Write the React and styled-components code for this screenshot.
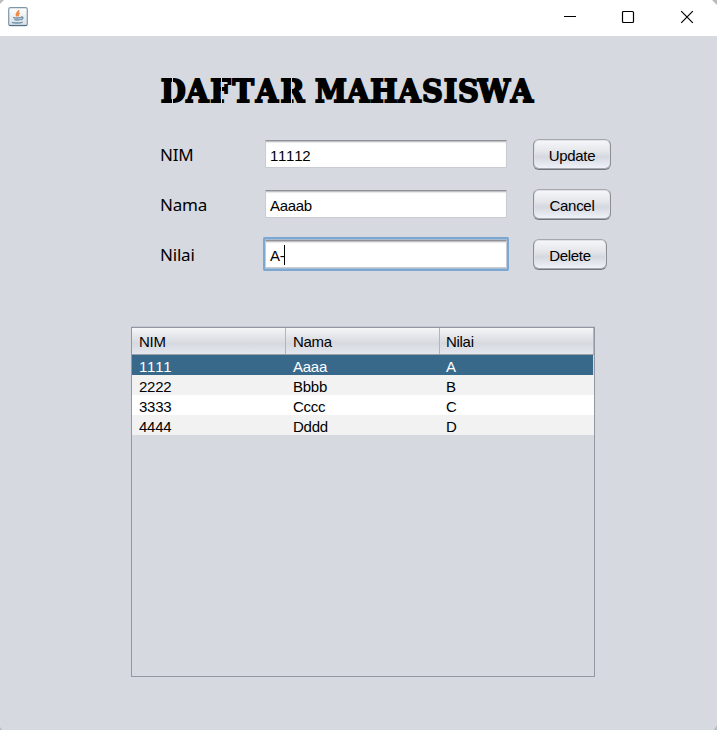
import React from "react";
import styled, { createGlobalStyle } from "styled-components";

const GlobalStyle = createGlobalStyle`
  * { box-sizing: border-box; }
  body { margin: 0; background: #d6d9e0; overflow: hidden; }
`;

const Window = styled.div`
  width: 717px;
  height: 730px;
  display: flex;
  flex-direction: column;
  background: #d6d9e0;
  color: #000;
  font: 15px/20px "Liberation Sans", Arial, sans-serif;
  overflow: hidden;
  position: relative;
`;

const CornerMarks = styled.svg`
  position: absolute;
  inset: 0;
  pointer-events: none;
`;

const TitleBar = styled.header`
  height: 36px;
  flex: none;
  background: #fff;
  display: flex;
  align-items: flex-start;
  justify-content: space-between;
  padding: 0 1px 0 8px;
`;

const AppIcon = styled.svg`
  width: 20px;
  height: 20px;
  margin-top: 7px;
`;

const WindowControls = styled.div`
  display: flex;
`;

const ControlButton = styled.button`
  width: 58.5px;
  height: 34px;
  padding: 0;
  border: 0;
  background: none;
  display: grid;
  place-items: center;
`;

const Content = styled.main`
  padding: 37px 0 0 131px;
`;

const Title = styled.h1`
  margin: 0 0 0 30px;
  height: 36px;
  width: 378px;
  font: bold 32px/36px "DejaVu Serif Condensed", "DejaVu Serif", serif;
  font-stretch: condensed;
  -webkit-text-stroke: 1.8px #000;
  white-space: nowrap;
`;

const Letter = styled.span`
  display: inline-flex;
  justify-content: center;
  width: ${(p) => p.$width}px;
  height: 36px;
  vertical-align: top;
  position: relative;

  /* stencil bridge cut through the glyph */
  &::after {
    content: "";
    display: ${(p) => (p.$cut ? "block" : "none")};
    position: absolute;
    left: ${(p) => p.$cut}px;
    top: 3px;
    width: 1px;
    height: 30px;
    background: #d6d9e0;
  }
`;

const Form = styled.form`
  margin-top: 27px;
  margin-left: 29px;
  display: grid;
  grid-template-columns: 102px 246px auto;
  grid-auto-rows: 38px;
  row-gap: 12px;
`;

const Label = styled.label`
  font: 17px/38px "Noto Sans", "Open Sans", sans-serif;
  letter-spacing: -0.2px;
`;

const FieldFrame = styled.div`
  width: 246px;
  height: 34px;
  margin: 1px 0 0 1px;
  padding: 3px 2px 3px 2px;
  border-radius: 2px;
  box-shadow: ${(p) => (p.$focused ? "inset 0 0 0 2px #7aa8d3, inset 0 0 0 3px #a9bdd2" : "none")};
`;

const Field = styled.div`
  height: 28px;
  padding: 3px 0 0 4px;
  background: #fff;
  border: 1px solid #c9ccd2;
  border-top-color: #8f9196;
  box-shadow: inset 0 1px 0 #c0c1c4, inset 0 2px 1px #e8e8e8;
  display: flex;
  align-items: center;
  font-kerning: none;
  letter-spacing: -0.3px;
  white-space: pre;
`;

const Caret = styled.span`
  width: 1px;
  height: 20px;
  margin: -2px 0 0 0;
  background: #000;
`;

const Button = styled.button`
  justify-self: start;
  width: ${(p) => p.$width}px;
  height: 31px;
  margin: 3px 0 0 25px;
  padding: 3px 0 0;
  border: 1px solid #93959b;
  border-color: #a6a8ae #8d8f95 #74767d;
  border-radius: 6px;
  background: linear-gradient(#f6f7f9 0%, #e5e7eb 38%, #d5d8df 58%, #e5e8ee 82%, #f1f4fa 100%);
  box-shadow: inset 0 -1px 0 #a7a9b0, inset 0 0 0 1px #dfe1e6;
  font: 15px/20px "Liberation Sans", Arial, sans-serif;
  letter-spacing: -0.3px;
  color: #000;
`;

const Table = styled.div`
  width: 464px;
  height: 350px;
  margin-top: 53px;
  border: 1px solid #9297a1;
  box-shadow: 0 -1px 0 #c6c9d1;
`;

const Columns = styled.div`
  display: grid;
  grid-template-columns: 154px 154px 154px;
`;

const HeaderRow = styled(Columns)`
  height: 27px;
  border-bottom: 1px solid #9a9fa8;
  background: linear-gradient(#f5f6f8 0%, #e2e4e8 35%, #d6d9df 60%, #e5e9ef 100%);
`;

const HeaderCell = styled.div`
  padding: 4px 0 0 7px;
  border-right: 1px solid #b2b5bc;
  letter-spacing: -0.3px;

  &:last-child { padding-left: 6px; }
`;

const Row = styled(Columns)`
  height: 20px;
  margin-right: ${(p) => (p.$selected ? 1 : 0)}px;
  background: ${(p) => (p.$selected ? "#39698a" : p.$striped ? "#f2f2f2" : "#fff")};
  color: ${(p) => (p.$selected ? "#fff" : "#000")};
`;

const Cell = styled.div`
  padding: 2px 0 0 7px;
  line-height: 20px;
  letter-spacing: -0.25px;
  font-kerning: none;

  &:last-child { padding-left: 6px; }
`;

const titleWords = [
  [["D", 24.5, 11], ["A", 24], ["F", 22, 11], ["T", 23.5], ["A", 24], ["R", 27, 12]],
  [["M", 30], ["A", 24.5], ["H", 26.5], ["A", 25], ["S", 21], ["I", 15], ["S", 21], ["W", 30], ["A", 26]],
];

const fields = [
  { label: "NIM", value: "11112", action: "Update", width: 78 },
  { label: "Nama", value: "Aaaab", action: "Cancel", width: 78 },
  { label: "Nilai", value: "A-", action: "Delete", width: 74, focused: true },
];

const rows = [
  ["1111", "Aaaa", "A"],
  ["2222", "Bbbb", "B"],
  ["3333", "Cccc", "C"],
  ["4444", "Dddd", "D"],
];

function JavaIcon() {
  return (
    <AppIcon viewBox="0 0 20 20" fill="none">
      <defs>
        <linearGradient id="tile" x2="0" y2="1">
          <stop stopColor="#fff" />
          <stop offset="1" stopColor="#d9dfe4" />
        </linearGradient>
      </defs>
      <rect x=".7" y=".7" width="18.6" height="18" rx="1.8" fill="url(#tile)" stroke="#7d97aa" strokeWidth="1.2" />
      <path d="M1 18.4h18" stroke="#4f6e86" />
      <path d="M10.6 3C11.4 5 6.7 6.2 9 9.2M11.6 5.7C9.3 7 10.1 7.8 10.3 9.3" stroke="#ed8b45" strokeWidth="1.7" />
      <path d="M5.2 10.3c2 .8 6 .7 8 0M6.3 12.4c2 .8 4 .7 6 0M13 10.1c2.7-.6 2.5 2-.4 2.6M4 15.3c2 1 8 1 10.6-.2" stroke="#6c8fa9" strokeWidth="1.4" />
    </AppIcon>
  );
}

export default function App() {
  return (
    <Window>
      <GlobalStyle />
      <TitleBar>
        <JavaIcon />
        <WindowControls>
          <ControlButton aria-label="Minimize">
            <svg width="14" height="14" stroke="#000"><path d="M1 6.5h12" /></svg>
          </ControlButton>
          <ControlButton aria-label="Maximize">
            <svg width="14" height="14" stroke="#000" strokeWidth="1.2" fill="none"><rect x="1.5" y="1.5" width="11" height="11" rx="1" /></svg>
          </ControlButton>
          <ControlButton aria-label="Close">
            <svg width="14" height="14" stroke="#000" strokeWidth="1.2"><path d="M1.2 1.2l11.6 11.6M12.8 1.2L1.2 12.8" /></svg>
          </ControlButton>
        </WindowControls>
      </TitleBar>
      <Content>
        <Title>
          {titleWords.map((word, w) => (
            <React.Fragment key={w}>
              {w > 0 && " "}
              {word.map(([glyph, width, cut], i) => (
                <Letter key={i} $width={width} $cut={cut}>{glyph}</Letter>
              ))}
            </React.Fragment>
          ))}
        </Title>
        <Form>
          {fields.map((f) => (
            <React.Fragment key={f.label}>
              <Label>{f.label}</Label>
              <FieldFrame $focused={f.focused}>
                <Field>{f.value}{f.focused && <Caret />}</Field>
              </FieldFrame>
              <Button type="button" $width={f.width}>{f.action}</Button>
            </React.Fragment>
          ))}
        </Form>
        <Table>
          <HeaderRow>
            {["NIM", "Nama", "Nilai"].map((h) => <HeaderCell key={h}>{h}</HeaderCell>)}
          </HeaderRow>
          {rows.map((r, i) => (
            <Row key={r[0]} $selected={i === 0} $striped={i % 2 === 1}>
              {r.map((c) => <Cell key={c}>{c}</Cell>)}
            </Row>
          ))}
        </Table>
      </Content>
      <CornerMarks width="717" height="730">
        <path d="M0 0H4L0 4ZM717 0H712L717 5ZM0 730V727L2 730ZM717 730V725L714 730Z" fill="#b9bbc0" />
      </CornerMarks>
    </Window>
  );
}
